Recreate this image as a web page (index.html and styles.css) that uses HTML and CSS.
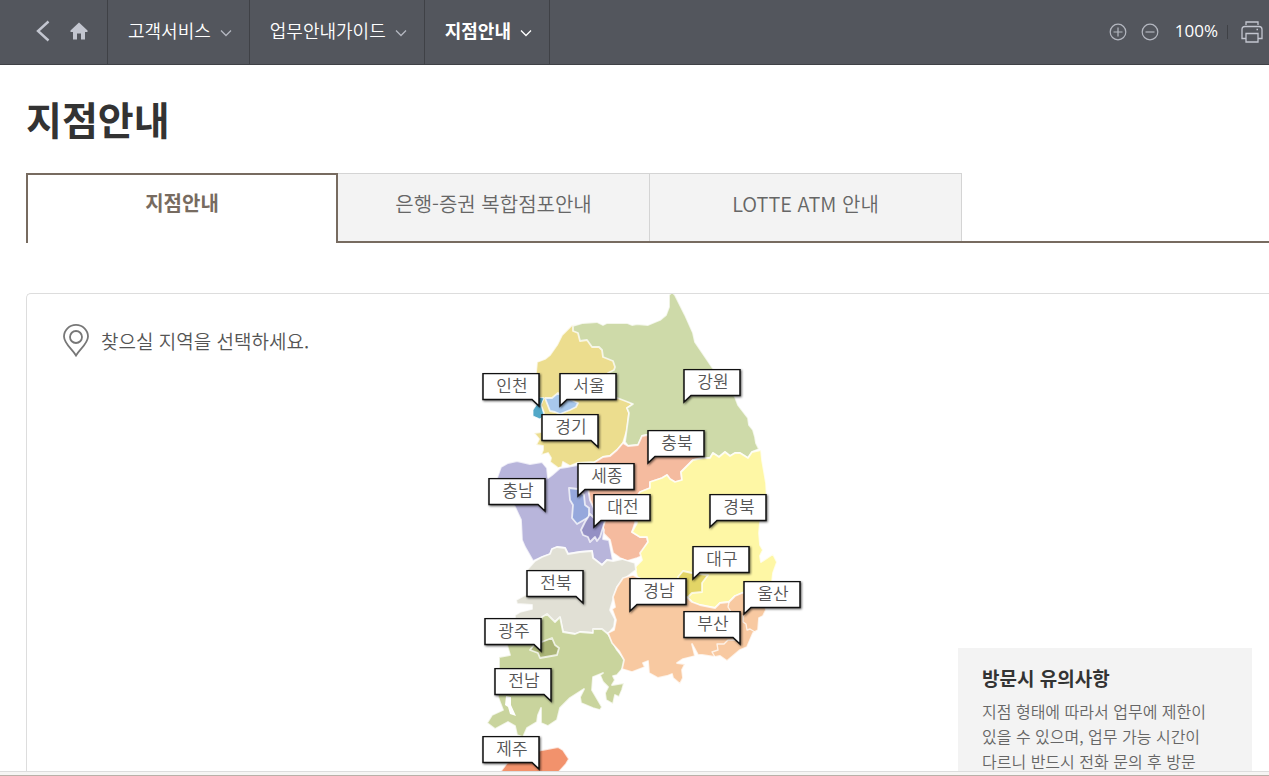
FILE: index.html
```html
<!DOCTYPE html>
<html lang="ko">
<head>
<meta charset="utf-8">
<title>지점안내</title>
<link rel="stylesheet" href="styles.css">
</head>
<body>
<svg class="defs" aria-hidden="true">
  <symbol id="chevron" viewBox="0 0 12 8"><path d="M1 1.5 6 6.5 11 1.5" fill="none" stroke="currentColor" stroke-width="1.3"/></symbol>
  <symbol id="tail-left" viewBox="0 0 60 38"><path d="M1 .5H57V26.500H8L1 33Z" fill="#fff" stroke="#111" stroke-width="1.5"/></symbol>
  <symbol id="tail-right" viewBox="0 0 60 38"><path d="M1 .5H57V33L50 26.500H1Z" fill="#fff" stroke="#111" stroke-width="1.5"/></symbol>
</svg>

<header class="topbar">
  <nav class="crumbs" aria-label="메뉴 경로">
    <div class="crumb-tools">
      <button class="icon-btn" type="button" aria-label="뒤로">
        <svg width="14" height="22" viewBox="0 0 14 22"><path d="M12.500 1.500 2 11 12.500 20.500" fill="none" stroke="#c3c6d0" stroke-width="2.400"/></svg>
      </button>
      <a class="icon-btn" href="#home" aria-label="홈">
        <svg width="18" height="18" viewBox="0 0 18 18"><path d="M9 .5 17.500 8.500V10H15V17.500H11V11.500H7V17.500H3V10H.5V8.500Z" fill="#c3c6d0"/></svg>
      </a>
    </div>
    <button class="crumb" type="button">고객서비스<svg class="chevron"><use href="#chevron"/></svg></button>
    <button class="crumb" type="button">업무안내가이드<svg class="chevron"><use href="#chevron"/></svg></button>
    <button class="crumb current" type="button">지점안내<svg class="chevron"><use href="#chevron"/></svg></button>
  </nav>
  <div class="view-tools">
    <button class="icon-btn" type="button" aria-label="확대">
      <svg width="18" height="18" viewBox="0 0 18 18" fill="none" stroke="#b4b7c0" stroke-width="1.200"><circle cx="9" cy="9" r="7.800"/><path d="M4.500 9H13.500M9 4.500V13.500"/></svg>
    </button>
    <button class="icon-btn" type="button" aria-label="축소">
      <svg width="18" height="18" viewBox="0 0 18 18" fill="none" stroke="#b4b7c0" stroke-width="1.200"><circle cx="9" cy="9" r="7.800"/><path d="M4.500 9H13.500"/></svg>
    </button>
    <span class="zoom-level">100%</span>
    <span class="divider"></span>
    <button class="icon-btn" type="button" aria-label="인쇄">
      <svg width="22" height="22" viewBox="0 0 22 22" fill="none" stroke="#c3c6d0" stroke-width="1.300"><path d="M5 4V1H17V4M5 17.500H1V8.500Q1 5.500 4 5.500H18Q21 5.500 21 8.500V17.500H17M5 12.500H17V21H5Z"/><path d="M15.500 8.500H17"/></svg>
    </button>
  </div>
</header>

<main class="content">
  <h1 class="title">지점안내</h1>
  <nav class="tabs" aria-label="안내 구분">
    <a class="tab active" href="#branch" aria-current="page">지점안내</a>
    <a class="tab" href="#complex">은행-증권 복합점포안내</a>
    <a class="tab" href="#atm">LOTTE ATM 안내</a>
  </nav>

  <section class="panel" id="branch">
    <p class="prompt">
      <svg width="26" height="33" viewBox="0 0 26 33" fill="none" stroke="#777" stroke-width="1.800"><path d="M13 31.500C9.500 25.500 1 19.500 1 12.500A12 11.600 0 0 1 25 12.500C25 19.500 16.500 25.500 13 31.500Z"/><circle cx="13" cy="13" r="6"/></svg>
      찾으실 지역을 선택하세요.
    </p>

    <div class="map">
      <svg class="land" viewBox="480 294 330 496" aria-hidden="true">
        <g stroke="#fff" stroke-opacity=".75" stroke-width="1.800" stroke-linejoin="round">
          <path fill="#ecdd8e" d="M572 325 562 335 557 345 550 355 545 359 537 362 536 373 537 398 543 398 541 405 544 413 541 418 541 432 534 433 539 439 536 445 543 446 543 450 541 455 548 453 551 458 550 462 558 468 562 467 563 462 570 466 577 463 595 462 603 457 610 456 617 450 623 443 627 430 629 413 627 408 633 404 617 396 620 370 615 350 580 324Z"/>
          <path fill="#cedaa9" d="M573 326 583 323 597 322 603 325 607 323 627 323 632 325 637 324 648 325 660 320 666 315 669 307 669 295 672 292 675 295 685 315 693 333 695 342 712 367 735 397 738 405 748 418 749 425 753 430 755 437 756 443 759 449 752 452 748 458 740 453 735 453 730 456 725 452 719 457 713 453 710 458 703 458 647 448 647 435 642 436 638 445 628 446 625 442 629 413 627 408 633 404 620 399 606 394 603 379 608 373 614 370 615 367 613 361 603 357 602 350 599 347 592 347 587 340 580 341 578 333 573 331Z"/>
          <path fill="#a8c8ec" d="M545 398 552 398 558 393 563 396 578 403 576 407 570 410 560 414 555 412 550 411Z"/>
          <path fill="#52a8c8" stroke-width="1" d="M537 397 544 398 541 405 544 415 540 419 533 416 533 410 537 404Z"/>
          <path fill="#f5bb9f" d="M595 462 603 457 610 456 617 450 623 443 628 446 638 445 642 436 647 435 703 445 703 457 693 460 681 472 682 480 675 482 670 479 667 475 662 478 650 482 650 488 640 492 637 496 635 523 632 532 640 537 647 537 648 542 643 550 642 556 637 558 627 561 620 558 613 553 610 540 603 533 603 522 593 517 590 503 585 493 585 475Z"/>
          <path fill="#fef7a5" d="M693 460 703 458 710 458 713 453 719 457 725 452 730 456 735 453 740 453 748 458 752 452 761 450 762 460 766 483 767 500 760 522 759 533 760 545 763 550 760 556 761 562 773 554 777 562 773 573 772 582 742 593 735 596 729 602 720 603 715 608 700 605 692 602 685 595 665 590 637 577 635 567 642 560 640 553 648 542 647 537 640 537 632 532 637 523 637 496 640 492 650 488 650 482 662 478 667 475 670 479 675 482 682 480 681 472Z"/>
          <path fill="#b8b5db" d="M497 478 501 467 508 463 517 461 530 464 542 462 547 468 548 478 552 475 560 468 567 467 577 465 585 470 590 500 604 530 603 539 609 540 613 561 607 560 602 565 593 558 592 551 580 552 568 554 565 548 557 547 552 549 550 554 542 557 533 561 525 547 522 540 521 520 515 507Z"/>
          <path fill="#96a8dc" d="M569 488 578 489 584 495 585 505 589 508 589 517 577 524 572 518 573 505 570 500Z"/>
          <path fill="#9490c4" d="M590 514 594 518 605 521 600 537 597 541 595 537 590 542 588 537 583 535 581 530 585 522Z"/>
          <path fill="#e1e0d5" d="M535 561 542 557 550 554 552 549 557 547 565 548 568 554 580 552 592 551 593 558 602 565 607 560 613 561 622 559 635 563 636 570 623 580 617 587 613 600 610 610 615 619 614 627 608 634 598 630 593 633 580 632 575 634 563 632 560 618 555 622 542 637 515 620 515 615 520 612 532 609 532 605 517 604 516 600 527 594 527 570Z"/>
          <path fill="#c9d49d" d="M515 635 540 625 542 617 547 614 555 622 560 617 563 632 575 634 580 632 593 633 593 629 602 629 608 634 610 637 617 650 625 660 623 668 617 675 613 676 615 680 612 685 624 683 622 690 619 697 615 695 613 704 606 700 605 693 608 687 603 682 600 675 603 673 593 677 592 690 602 707 600 710 593 708 581 703 580 697 584 689 570 698 560 708 557 720 548 726 541 723 541 708 538 715 537 722 527 728 523 737 517 735 515 726 508 722 495 729 487 723 492 715 503 710 498 697 499 667 499 657 510 655 507 645Z"/>
          <path fill="#fff" stroke="none" d="M506 696 511 697 511 705 516 716 510 714 508 707 505 705Z"/>
          <path fill="#abb577" d="M530 650 534 645 552 638 555 645 559 648 557 655 540 658 538 653Z"/>
          <path fill="#f8c9a1" d="M633 575 623 578 617 587 613 597 615 607 612 609 616 620 614 630 608 633 612 643 619 651 624 660 622 669 632 672 645 667 643 663 648 661 649 673 658 678 667 676 672 674 673 678 680 684 683 678 682 670 685 664 677 663 683 659 695 656 692 644 698 655 702 655 715 657 720 656 727 661 740 650 747 647 753 633 758 630 759 618 763 616 766 610 762 590 742 593 735 596 729 602 720 603 715 608 700 605 692 602 687 597 660 590 637 577Z"/>
          <path fill="#e3d566" d="M678 577 683 571 692 573 708 575 702 583 702 592 692 593 688 597 683 597Z"/>
          <path fill="none" stroke-width="1.400" d="M740 640H728L724 644H717L718 650 712 652 715 657M743 615V622L746 624 747 630 750 629 755 632M729 602 728 607 731 612"/>
          <path fill="#f2926c" d="M501 771 507 763 520 757 542 750 558 747 563 750 569 759 566 764 557 774 545 780 515 782Z"/>
        </g>
      </svg>
      <a class="pin incheon" href="#incheon"><svg class="bubble"><use href="#tail-right"/></svg><span>인천</span></a>
      <a class="pin seoul" href="#seoul"><svg class="bubble"><use href="#tail-left"/></svg><span>서울</span></a>
      <a class="pin gyeonggi" href="#gyeonggi"><svg class="bubble"><use href="#tail-right"/></svg><span>경기</span></a>
      <a class="pin gangwon" href="#gangwon"><svg class="bubble"><use href="#tail-left"/></svg><span>강원</span></a>
      <a class="pin chungbuk" href="#chungbuk"><svg class="bubble"><use href="#tail-left"/></svg><span>충북</span></a>
      <a class="pin chungnam" href="#chungnam"><svg class="bubble"><use href="#tail-right"/></svg><span>충남</span></a>
      <a class="pin sejong" href="#sejong"><svg class="bubble"><use href="#tail-left"/></svg><span>세종</span></a>
      <a class="pin daejeon" href="#daejeon"><svg class="bubble"><use href="#tail-left"/></svg><span>대전</span></a>
      <a class="pin gyeongbuk" href="#gyeongbuk"><svg class="bubble"><use href="#tail-left"/></svg><span>경북</span></a>
      <a class="pin daegu" href="#daegu"><svg class="bubble"><use href="#tail-left"/></svg><span>대구</span></a>
      <a class="pin gyeongnam" href="#gyeongnam"><svg class="bubble"><use href="#tail-left"/></svg><span>경남</span></a>
      <a class="pin ulsan" href="#ulsan"><svg class="bubble"><use href="#tail-left"/></svg><span>울산</span></a>
      <a class="pin busan" href="#busan"><svg class="bubble"><use href="#tail-right"/></svg><span>부산</span></a>
      <a class="pin jeonbuk" href="#jeonbuk"><svg class="bubble"><use href="#tail-right"/></svg><span>전북</span></a>
      <a class="pin gwangju" href="#gwangju"><svg class="bubble"><use href="#tail-right"/></svg><span>광주</span></a>
      <a class="pin jeonnam" href="#jeonnam"><svg class="bubble"><use href="#tail-right"/></svg><span>전남</span></a>
      <a class="pin jeju" href="#jeju"><svg class="bubble"><use href="#tail-right"/></svg><span>제주</span></a>
    </div>

    <aside class="notice">
      <h2>방문시 유의사항</h2>
      <p>지점 형태에 따라서 업무에 제한이<br>있을 수 있으며, 업무 가능 시간이<br>다르니 반드시 전화 문의 후 방문</p>
    </aside>
  </section>
</main>
<div class="bottom-bar"></div>
</body>
</html>
```

FILE: styles.css
```css
* { box-sizing: border-box; }

body {
  margin: 0;
  height: 100vh;
  display: flex;
  flex-direction: column;
  overflow: hidden;
  background: #fff;
  color: #555;
  font-family: "Noto Sans CJK KR", sans-serif;
}

a { color: inherit; text-decoration: none; }
button { font: inherit; color: inherit; background: none; border: 0; padding: 0; cursor: pointer; }
h1, h2, p { margin: 0; }
svg { display: block; flex: none; }
.defs { position: absolute; width: 0; height: 0; }

.topbar {
  flex: none;
  display: flex;
  justify-content: space-between;
  height: 65px;
  background: #53565d;
  border-bottom: 1px solid #3f4146;
  color: #fff;
}
.crumbs { display: flex; }
.crumb-tools {
  display: flex;
  align-items: center;
  gap: 20px;
  padding: 0 19px 3px 36px;
  border-right: 1px solid #3f4146;
}
.icon-btn { display: block; }
.crumb {
  display: flex;
  align-items: center;
  gap: 9px;
  padding: 0 17px 5px 20px;
  border-right: 1px solid #3f4146;
  font-size: 18px;
  font-weight: 350;
}
.crumb.current { font-weight: 700; }
.chevron { width: 12px; height: 8px; margin-top: 7px; color: #b4b7c0; }
.current .chevron { color: #fff; }

.view-tools { display: flex; align-items: center; padding-right: 6px; }
.view-tools .icon-btn + .icon-btn { margin-left: 14px; }
.zoom-level { margin: 0 9px 3px 16px; font-family: "Open Sans", sans-serif; font-size: 17px; }
.divider { width: 1px; height: 14px; margin-right: 13px; background: #3f4146; }

.content { flex: 1; min-height: 0; overflow: hidden; padding: 25px 0 0 26px; }
.title { margin-bottom: 27px; font-size: 39px; line-height: 56px; font-weight: 700; color: #333; }

.tabs { display: flex; height: 70px; margin-bottom: 50px; border-bottom: 2px solid #776b60; }
.tab {
  flex: 0 0 312px;
  display: flex;
  align-items: center;
  justify-content: center;
  padding-bottom: 9px;
  border: solid #d4d4d4;
  border-width: 1px 1px 0 0;
  background: #f3f3f3;
  color: #666;
  font-size: 20px;
  font-weight: 350;
}
.tab.active {
  height: 70px;
  padding-bottom: 14px;
  border: solid #776b60;
  border-width: 2px 2px 0;
  background: #fff;
  color: #776b60;
  font-weight: 700;
}

.panel {
  display: flex;
  align-items: flex-start;
  padding-right: 17px;
  border: 1px solid #ddd;
  border-right: 0;
  border-radius: 5px 0 0 5px;
}
.prompt {
  flex: 0 0 453px;
  display: flex;
  align-items: center;
  gap: 12px;
  padding: 29px 0 0 36px;
  font-size: 19px;
  font-weight: 350;
  line-height: 35px;
}

.map { position: relative; flex: none; width: 330px; }
.land { width: 330px; height: 496px; }
.pin {
  position: absolute;
  width: 60px;
  height: 38px;
  font-size: 17px;
  font-weight: 350;
  line-height: 24px;
  text-align: center;
}
.pin span { position: relative; }
.bubble {
  position: absolute;
  inset: 0;
  width: 60px;
  height: 38px;
  filter: drop-shadow(1px 1px 1px rgba(0, 0, 0, .6));
}
.incheon { left: 2px; top: 79px; }
.seoul { left: 79px; top: 79px; }
.gyeonggi { left: 61px; top: 120px; }
.gangwon { left: 203px; top: 75px; }
.chungbuk { left: 167px; top: 136px; }
.chungnam { left: 8px; top: 184px; }
.sejong { left: 97px; top: 169px; }
.daejeon { left: 113px; top: 200px; }
.gyeongbuk { left: 229px; top: 200px; }
.daegu { left: 212px; top: 252px; }
.gyeongnam { left: 149px; top: 284px; }
.ulsan { left: 263px; top: 287px; }
.busan { left: 203px; top: 317px; }
.jeonbuk { left: 46px; top: 276px; }
.gwangju { left: 4px; top: 324px; }
.jeonnam { left: 14px; top: 374px; }
.jeju { left: 2px; top: 442px; }

.notice {
  flex: 0 0 294px;
  margin: 354px 0 0 auto;
  padding: 16px 24px 24px;
  background: #f3f3f3;
}
.notice h2 { margin-bottom: 7px; font-size: 19px; line-height: 28px; font-weight: 700; color: #333; }
.notice p { font-size: 16px; line-height: 25px; font-weight: 350; white-space: nowrap; color: #666; }

.bottom-bar {
  flex: none;
  height: 5px;
  background: #f6f5f4;
  border-top: 1px solid #ddd;
  border-bottom: 1px solid #b9b0a8;
}
```
